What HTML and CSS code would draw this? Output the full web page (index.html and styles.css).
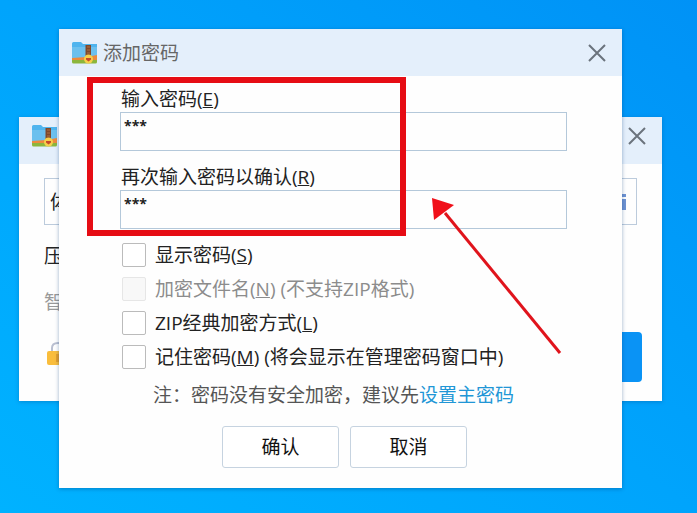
FILE: index.html
```
<!DOCTYPE html>
<html lang="zh-CN">
<head>
    <meta charset="UTF-8">
    <meta name="viewport" content="width=device-width, initial-scale=1.0">
    <title>添加密码</title>
    <link rel="stylesheet" href="styles.css">
</head>
<body>
    <svg class="symbols" aria-hidden="true">
        <symbol id="archive-icon" viewBox="0 0 25 22">
            <path d="M0 1.500Q0 0 1.500 0H9l2 2h14v15H0z" fill="#4fb4ee"/>
            <path d="M0 5h25v11H0z" fill="#6cc0ee"/>
            <path d="M0 16l14-1 11-2v6H0z" fill="#ee8a3c"/>
            <path d="M0 18h25v2q0 1.500-1.500 1.500h-22Q0 21.500 0 20z" fill="#8cb63c"/>
            <path d="M13.500 3h5.500v13h-5.500z" fill="#80482a"/>
            <path d="M15 5h3M15 8h3M15 11h3" stroke="#b07040"/>
            <circle cx="16.500" cy="17" r="4.500" fill="#f6cf4a"/>
            <path d="M14 16h5v1.500l-2.500 2-2.500-2z" fill="#c5472b"/>
        </symbol>
        <symbol id="close-icon" viewBox="0 0 18 18">
            <path d="M1 1l16 16M17 1L1 17" fill="none" stroke="#6b737c" stroke-width="2"/>
        </symbol>
    </svg>

    <main class="desktop">
        <section class="window window-back">
            <header class="title-bar">
                <svg class="app-icon"><use href="#archive-icon"/></svg>
                <button type="button" class="close" aria-label="关闭"><svg><use href="#close-icon"/></svg></button>
            </header>
            <div class="back-body">
                <div class="path-field">
                    <input type="text" value="体" aria-label="体">
                    <svg class="path-icon" viewBox="0 0 16 16"><path d="M2 0h12v3H2zM2 5h12v11H2z" fill="#6f93d2"/></svg>
                </div>
                <p class="back-label">压</p>
                <p class="back-hint">智</p>
                <div class="back-footer">
                    <svg class="lock" viewBox="0 0 22 24">
                        <path d="M5 10V6q0-5 6-5t6 5" fill="none" stroke="#b9bfd0" stroke-width="2"/>
                        <rect y="9" width="22" height="14" rx="2" fill="#f9bd3c"/>
                        <path d="M9 12h4v8H9z" fill="#e59f2a"/>
                    </svg>
                    <button type="button" class="primary" aria-label="立即压缩"></button>
                </div>
            </div>
        </section>

        <section class="window window-front">
            <header class="title-bar">
                <svg class="app-icon"><use href="#archive-icon"/></svg>
                <h1>添加密码</h1>
                <button type="button" class="close" aria-label="关闭"><svg><use href="#close-icon"/></svg></button>
            </header>
            <form class="password-form">
                <div class="form-group">
                    <label for="password">输入密码(<u>E</u>)</label>
                    <input type="text" id="password" value="***">
                </div>
                <div class="form-group">
                    <label for="confirm">再次输入密码以确认(<u>R</u>)</label>
                    <input type="text" id="confirm" value="***">
                </div>
                <div class="options">
                    <label class="option"><input type="checkbox"><span>显示密码(<u>S</u>)</span></label>
                    <label class="option disabled"><input type="checkbox" disabled><span>加密文件名(<u>N</u>) (不支持ZIP格式)</span></label>
                    <label class="option"><input type="checkbox"><span>ZIP经典加密方式(<u>L</u>)</span></label>
                    <label class="option"><input type="checkbox"><span>记住密码(<u>M</u>) (将会显示在管理密码窗口中)</span></label>
                </div>
                <p class="note">注：密码没有安全加密，建议先<a href="#">设置主密码</a></p>
                <div class="actions">
                    <button type="button">确认</button>
                    <button type="button">取消</button>
                </div>
            </form>
        </section>

        <div class="highlight"></div>
        <svg class="arrow" viewBox="0 0 130 156">
            <path d="M13 15L128 155" stroke="#e0141c" stroke-width="3"/>
            <path d="M0 0l22 7L2 22z" fill="#f0101a"/>
        </svg>
    </main>
</body>
</html>
```

FILE: styles.css
```
* {
    margin: 0;
    padding: 0;
    box-sizing: border-box;
}

body {
    font-family: "Open Sans", "Noto Sans CJK SC", sans-serif;
    font-size: 19px;
    line-height: 26px;
    color: #222;
}

button,
input {
    font: inherit;
    color: inherit;
}

.symbols {
    position: absolute;
    width: 0;
    height: 0;
}

.desktop {
    position: relative;
    min-height: 100vh;
    overflow: hidden;
    background: linear-gradient(to bottom left, #0092f6, #00a4fc 50%, #00b2ff);
}

/* Windows */
.window {
    position: absolute;
    background: #fefefe;
}

.window-back {
    top: 117px;
    left: 19px;
    right: 35px;
    box-shadow: 0 1px 4px rgba(0, 60, 120, 0.3);
}

.window-front {
    top: 29px;
    left: 59px;
    right: 75px;
    box-shadow: 0 1px 4px rgba(0, 60, 120, 0.4);
}

.title-bar {
    display: flex;
    align-items: center;
    gap: 6px;
    height: 47px;
    padding: 0 16px 0 13px;
    background: #e4effb;
}

.window-back .title-bar {
    padding-bottom: 9px;
}

.title-bar h1 {
    font-size: 19px;
    font-weight: normal;
    color: #666;
}

.app-icon {
    width: 25px;
    height: 22px;
}

.close {
    display: flex;
    margin-left: auto;
    border: none;
    background: none;
}

.close svg {
    width: 18px;
    height: 18px;
}

/* Back window */
.back-body {
    padding: 14px 20px 19px 25px;
}

.path-field {
    display: flex;
    align-items: center;
    height: 47px;
    margin-right: 5px;
    padding: 0 8px 0 5px;
    border: 1px solid #bccbdc;
}

.path-field input {
    flex: 1;
    min-width: 0;
    border: none;
    background: none;
}

.path-icon {
    width: 16px;
    height: 16px;
}

.back-label {
    margin-top: 18px;
}

.back-hint {
    margin-top: 20px;
    color: #999;
}

.back-footer {
    display: flex;
    align-items: center;
    justify-content: space-between;
    margin-top: 17px;
}

.lock {
    width: 22px;
    height: 24px;
    margin: 0 0 6px 3px;
}

.primary {
    width: 140px;
    height: 50px;
    border: none;
    border-radius: 4px;
    background: #0a93f5;
}

/* Password form */
.password-form {
    padding: 10px 55px 20px 61px;
}

.form-group {
    display: flex;
    flex-direction: column;
    margin-bottom: 13px;
}

.form-group label {
    padding-left: 1px;
}

.form-group input {
    height: 39px;
    padding: 0 3px 12px;
    border: 1px solid #b4c8da;
    background: none;
    font-size: 14px;
    font-weight: 700;
}

.options {
    display: grid;
    gap: 10px;
    padding: 1px 2px 0;
}

.option {
    display: flex;
    align-items: center;
    gap: 9px;
    height: 24px;
}

.option input {
    appearance: none;
    width: 24px;
    height: 24px;
    border: 1px solid #bbb;
    border-radius: 2px;
    background: #fff;
}

.option.disabled {
    color: #8c8c8c;
}

.option input:disabled {
    border-color: #e6e6e6;
    background: #f8f8f8;
}

.note {
    margin: 13px 0 18px 33px;
    color: #555;
}

.note a {
    color: #2196d6;
    text-decoration: none;
}

.actions {
    display: flex;
    justify-content: center;
    gap: 11px;
    padding-left: 2px;
}

.actions button {
    width: 117px;
    height: 42px;
    border: 1px solid #c6d3e0;
    border-radius: 3px;
    background: #fff;
    color: #111;
}

/* Red marker and arrow drawn over the windows */
.highlight {
    position: absolute;
    top: 77px;
    left: 87px;
    width: 319px;
    height: 159px;
    border: 6px solid #e60c14;
    pointer-events: none;
}

.arrow {
    position: absolute;
    top: 198px;
    left: 432px;
    width: 130px;
    height: 156px;
    pointer-events: none;
}
```
